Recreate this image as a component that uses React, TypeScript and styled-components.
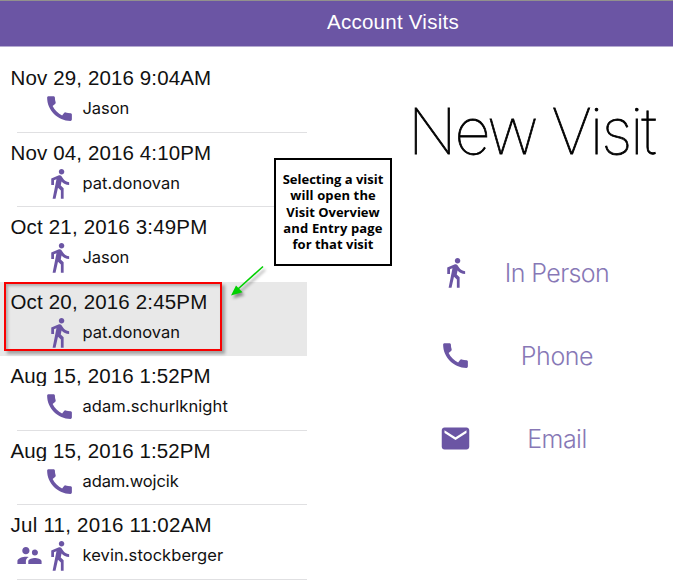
import React from "react";
import styled, { createGlobalStyle } from "styled-components";
import { MdCall, MdDirectionsWalk, MdEmail, MdSupervisorAccount } from "react-icons/md";

const PURPLE = "#6b55a4";

const GlobalStyle = createGlobalStyle`
  * { box-sizing: border-box; }
  body { margin: 0; background: #fff; overflow: hidden; }
`;

const Page = styled.div`
  position: relative;
  display: flex;
  flex-direction: column;
  width: 673px;
  height: 582px;
  overflow: hidden;
  background: #fff;
  color: #111;
  font-family: "Liberation Sans", Arial, sans-serif;
`;

const Header = styled.header`
  flex: none;
  height: 47px;
  display: flex;
  justify-content: center;
  border-top: 1px solid #92918d;
  border-bottom: 1px solid #b5abd0;
  background: ${PURPLE};
  padding-left: 113px;
`;

const Title = styled.h1`
  margin: 0;
  font-size: 20.5px;
  font-weight: 400;
  line-height: 42px;
  letter-spacing: 0.25px;
  color: #fff;
`;

const Body = styled.div`
  display: flex;
  flex: 1;
  min-height: 0;
`;

const VisitList = styled.ul`
  list-style: none;
  margin: 0;
  padding: 11px 0 0;
  width: 307px;
  flex: none;
`;

const VisitRow = styled.li<{ $selected?: boolean; $divider?: boolean }>`
  position: relative;
  height: 74.5px;
  background: ${(p) => (p.$selected ? "#e8e8e8" : "transparent")};

  &::after {
    content: "";
    position: absolute;
    left: 17px;
    right: 0;
    bottom: 0;
    height: 1px;
    background: ${(p) => (p.$divider ? "#e0e0e2" : "transparent")};
  }
`;

const VisitDate = styled.div<{ $spacing: number }>`
  height: 30px;
  padding: 8px 0 0 10.5px;
  overflow: hidden;
  font-size: 20.5px;
  line-height: 24px;
  letter-spacing: ${(p) => p.$spacing}px;
  white-space: nowrap;
`;

const VisitDetail = styled.div`
  display: grid;
  grid-template-columns: 28.5px 33px 1fr;
  align-items: center;
  height: 33px;
  margin-top: 4px;
  padding-left: 14.5px;
  color: ${PURPLE};

  svg { display: block; }
`;

const VisitName = styled.span<{ $spacing: number }>`
  padding: 0 0 1px 6.5px;
  color: #111;
  font-family: Inter, "Liberation Sans", sans-serif;
  font-size: 16.5px;
  line-height: 22px;
  letter-spacing: ${(p) => p.$spacing}px;
`;

const SelectionFrame = styled.div`
  position: absolute;
  z-index: 1;
  left: 4px;
  top: 0;
  width: 218px;
  height: 69px;
  border: 2px solid #f80000;
  box-shadow: 3px 3px 3px rgba(0, 0, 0, 0.3), inset 2px 2px 3px rgba(0, 0, 0, 0.25);
`;

const NewVisit = styled.section`
  flex: 1;
  min-width: 0;
  padding-top: 44px;
`;

const NewVisitTitle = styled.h2`
  margin: 0 0 0 101px;
  font-family: Inter, sans-serif;
  font-size: 63px;
  font-weight: 100;
  line-height: 80px;
  letter-spacing: -2.15px;
  white-space: nowrap;
  color: #000;
  -webkit-text-stroke: 0.8px #000;
`;

const Options = styled.div`
  margin: 60px 0 0 132px;
`;

const Option = styled.div`
  display: grid;
  grid-template-columns: 33px 170px;
  align-items: center;
  height: 83px;
  color: ${PURPLE};
`;

const OptionLabel = styled.span<{ $spacing: number }>`
  justify-self: center;
  font-family: Inter, sans-serif;
  font-size: 25px;
  font-weight: 300;
  line-height: 32px;
  letter-spacing: ${(p) => p.$spacing}px;
  white-space: nowrap;
  color: #8778b6;
`;

const Callout = styled.aside`
  position: absolute;
  left: 274px;
  top: 158px;
  width: 118px;
  height: 108px;
  padding-top: 11px;
  border: 2px solid #000;
  background: #fff;
  color: #000;
  text-align: center;
  font-family: "Trebuchet MS", "Open Sans", sans-serif;
  font-size: 13px;
  font-weight: 700;
  line-height: 16.3px;
`;

const CalloutLine = styled.div<{ $spacing: number }>`
  letter-spacing: ${(p) => p.$spacing}px;
  white-space: nowrap;
`;

const Arrow = styled.svg`
  position: absolute;
  left: 225px;
  top: 260px;
  filter: drop-shadow(2px 3px 1.5px rgba(0, 0, 0, 0.4));
`;

type Kind = "phone" | "walk";

interface Visit {
  date: string;
  dateSpacing: number;
  name: string;
  nameSpacing: number;
  kind: Kind;
  group?: boolean;
  selected?: boolean;
}

const visits: Visit[] = [
  { date: "Nov 29, 2016 9:04AM", dateSpacing: 0.13, name: "Jason", nameSpacing: -0.05, kind: "phone" },
  { date: "Nov 04, 2016 4:10PM", dateSpacing: 0.13, name: "pat.donovan", nameSpacing: 0.04, kind: "walk" },
  { date: "Oct 21, 2016 3:49PM", dateSpacing: 0.17, name: "Jason", nameSpacing: -0.05, kind: "walk" },
  { date: "Oct 20, 2016 2:45PM", dateSpacing: 0.17, name: "pat.donovan", nameSpacing: 0.04, kind: "walk", selected: true },
  { date: "Aug 15, 2016 1:52PM", dateSpacing: 0.1, name: "adam.schurlknight", nameSpacing: 0.08, kind: "phone" },
  { date: "Aug 15, 2016 1:52PM", dateSpacing: 0.1, name: "adam.wojcik", nameSpacing: -0.12, kind: "phone" },
  { date: "Jul 11, 2016 11:02AM", dateSpacing: 0.25, name: "kevin.stockberger", nameSpacing: 0.06, kind: "walk", group: true },
];

const options = [
  { label: "In Person", Icon: MdDirectionsWalk, spacing: -0.6 },
  { label: "Phone", Icon: MdCall, spacing: -0.4 },
  { label: "Email", Icon: MdEmail, spacing: -0.5 },
];

const calloutLines = [
  { text: "Selecting a visit", spacing: 0 },
  { text: "will open the", spacing: 0.12 },
  { text: "Visit Overview", spacing: 0 },
  { text: "and Entry page", spacing: 0.15 },
  { text: "for that visit", spacing: 0 },
];

export default function App() {
  return (
    <Page>
      <GlobalStyle />
      <Header>
        <Title>Account Visits</Title>
      </Header>
      <Body>
        <VisitList>
          {visits.map((v, i) => (
            <VisitRow key={i} $selected={v.selected} $divider={!v.selected && !visits[i + 1]?.selected}>
              <VisitDate $spacing={v.dateSpacing}>{v.date}</VisitDate>
              <VisitDetail>
                <span>{v.group && <MdSupervisorAccount size={29} />}</span>
                {v.kind === "phone" ? <MdCall size={33} /> : <MdDirectionsWalk size={33} />}
                <VisitName $spacing={v.nameSpacing}>{v.name}</VisitName>
              </VisitDetail>
              {v.selected && <SelectionFrame />}
            </VisitRow>
          ))}
        </VisitList>
        <NewVisit>
          <NewVisitTitle>New Visit</NewVisitTitle>
          <Options>
            {options.map(({ label, Icon, spacing }) => (
              <Option key={label}>
                <Icon size={33} />
                <OptionLabel $spacing={spacing}>{label}</OptionLabel>
              </Option>
            ))}
          </Options>
        </NewVisit>
      </Body>
      <Callout>
        {calloutLines.map((l) => (
          <CalloutLine key={l.text} $spacing={l.spacing}>{l.text}</CalloutLine>
        ))}
      </Callout>
      <Arrow width="46" height="44" viewBox="0 0 46 44">
        <path d="M38 6.5 L13 29" stroke="#00d000" strokeWidth="1.6" fill="none" />
        <path d="M6 35.5 L11 25.5 L17.5 32.3 Z" fill="#00d000" />
      </Arrow>
    </Page>
  );
}
